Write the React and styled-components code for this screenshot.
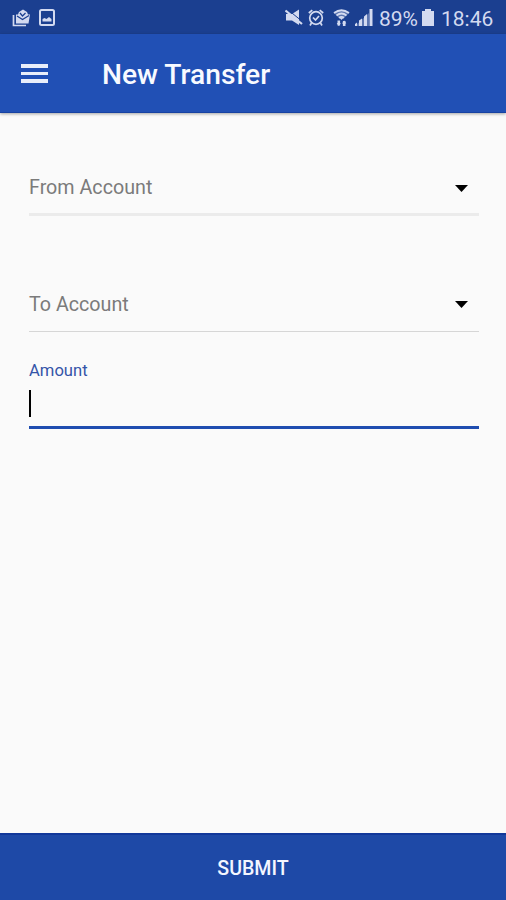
import React, {useState} from 'react';
import styled, {createGlobalStyle} from 'styled-components';

const GlobalStyle = createGlobalStyle`
  * {
    box-sizing: border-box;
  }

  body {
    margin: 0;
    background-color: #fafafa;
    font-family: Roboto, 'Liberation Sans', sans-serif;
  }
`;

const Screen = styled.div`
  display: flex;
  flex-direction: column;
  height: 100vh;
  overflow: hidden;
  background-color: #fafafa;
`;

const StatusBar = styled.div`
  display: flex;
  flex: none;
  align-items: center;
  justify-content: space-between;
  height: 34px;
  padding: 1px 12px 0 12px;
  background-color: #1b3f90;
  color: #d3daf0;
`;

const StatusGroup = styled.div`
  display: flex;
  align-items: center;
`;

const StatusIcon = styled.svg`
  display: block;
  flex: none;
  margin-right: ${props => props.$gap || 0}px;
`;

const StatusText = styled.span`
  width: ${props => props.$width}px;
  padding-top: 2px;
  font-size: 21px;
  line-height: 24px;
  white-space: nowrap;
`;

const AppBar = styled.header`
  display: flex;
  flex: none;
  align-items: center;
  height: 79px;
  padding-left: 20px;
  background-color: #2150b5;
  border-bottom: 1px solid #1742a2;
  box-shadow: 0 1px 3px rgba(0, 0, 0, 0.35);
`;

const MenuButton = styled.button`
  display: flex;
  flex-direction: column;
  gap: 4px;
  width: 27px;
  margin: 1px 54px 0 1px;
  padding: 0;
  border: none;
  background: none;
`;

const MenuLine = styled.span`
  height: 3.600px;
  background-color: #e9eefa;
`;

const Title = styled.h1`
  margin: 3px 0 0;
  color: #f8faff;
  font-size: 28.2px;
  font-weight: 500;
  line-height: 36px;
`;

const Form = styled.form`
  display: flex;
  flex: 1;
  flex-direction: column;
  padding: 50px 27px 0 29px;
`;

const Select = styled.div`
  display: flex;
  align-items: center;
  justify-content: space-between;
  height: ${props => props.$thick ? 53 : 54}px;
  margin-bottom: ${props => props.$gap}px;
  padding-right: 11px;
  border-bottom: ${props => props.$thick ? '3px solid #ebebeb' : '1px solid #d6d6d6'};
  color: #7b7b7b;
  font-size: 19.7px;
  line-height: 24px;
`;

const Field = styled.label`
  display: flex;
  flex-direction: column;
  height: 69px;
  border-bottom: 3px solid #1f4db0;
`;

const FieldLabel = styled.span`
  padding-top: 1px;
  color: #3454a8;
  font-size: 16.6px;
  line-height: 20px;
`;

const Caret = styled.span`
  width: 2px;
  height: 27px;
  margin-top: 9px;
  background-color: #000;
`;

const SubmitButton = styled.button`
  flex: none;
  height: 67px;
  padding: 2px 0 0;
  border: none;
  border-top: 2px solid #12389a;
  background-color: #1e49a7;
  color: #f3f6ff;
  font-family: inherit;
  font-size: 19.6px;
  font-weight: 500;
`;

const Arrow = () => (
    <svg width="13" height="7" viewBox="0 0 13 7">
        <path d="M0 0h13L6.5 7z" fill="#000"/>
    </svg>
);

const Status = () => (
    <StatusBar>
        <StatusGroup>
            <StatusIcon $gap={8} width="19" height="18" viewBox="0 0 19 18">
                <path d="M1.500 6v10.500H14" fill="none" stroke="currentColor" strokeWidth="1.700"/>
                <path d="M4 5.500h2l1-2.500 4-2.500 4 2.500 1 2.500h2l-1.500 9H4z" fill="currentColor"/>
                <path d="M5 7l5.500 3.500L17 6.500M8 4l2.500 3L13.500 4" fill="none" stroke="#1b3f90" strokeWidth="1.200"/>
            </StatusIcon>
            <StatusIcon width="16" height="17" viewBox="0 0 16 17">
                <rect x="1" y="1" width="14" height="15" rx="1.500" fill="none" stroke="currentColor" strokeWidth="2"/>
                <path d="M3.500 12.500V10l2-1 2 1 2.500-2 2.500 2v2.500z" fill="currentColor"/>
            </StatusIcon>
        </StatusGroup>
        <StatusGroup>
            <StatusIcon $gap={5} width="18" height="17" viewBox="0 0 18 17">
                <path d="M1 5h6l7-4.500V16L7 11.500H1z" fill="currentColor"/>
                <path d="M2 0l16 13" stroke="#1b3f90" strokeWidth="1"/>
                <path d="M.5 1.500l16.500 13.500" stroke="currentColor" strokeWidth="2.200"/>
            </StatusIcon>
            <StatusIcon $gap={9} width="16" height="18" viewBox="0 0 16 18">
                <g fill="none" stroke="currentColor" strokeWidth="1.700">
                    <circle cx="8" cy="9" r="6.300"/>
                    <path d="M.8 4l3.500-2.800M15.200 4l-3.500-2.800M3.500 14L2 16.500M12.500 14l1.500 2.500M5 8.500l2.500 2.500L11 7"/>
                </g>
            </StatusIcon>
            <StatusIcon $gap={5} width="17" height="18" viewBox="0 0 17 18">
                <path d="M1 4Q8.500-1.500 16 4L10 10H7z" fill="currentColor" opacity="0.35"/>
                <g fill="none" stroke="currentColor" strokeWidth="1.800">
                    <path d="M1 4Q8.500-1.500 16 4M3.500 6.500Q8.500 2.500 13.500 6.500M6 8.800Q8.500 7 11 8.800"/>
                </g>
                <path d="M8.500 11L6.500 8.500h4z" fill="currentColor"/>
                <path d="M5.800 11.500v5M11.200 17v-5" stroke="currentColor" strokeWidth="2.600"/>
                <path d="M3.700 14L5.800 17l2-3zM9 14.500l2.200-3 2.100 3z" fill="currentColor"/>
            </StatusIcon>
            <StatusIcon $gap={6} width="18" height="18" viewBox="0 0 18 18">
                <path d="M0 17L14 4v13z" fill="currentColor" opacity="0.35"/>
                <path d="M0 17v-2l2-1.500V17zM4 17v-5.500l3-2V17zM9 17V7.500L12 5v12zM14.500 17V0h3v17z" fill="currentColor"/>
            </StatusIcon>
            <StatusText $width={43}>89%</StatusText>
            <StatusIcon $gap={7} width="12" height="18" viewBox="0 0 12 18">
                <path d="M0 2h3V0h6v2h3v15H0z" fill="currentColor"/>
            </StatusIcon>
            <StatusText $width={53}>18:46</StatusText>
        </StatusGroup>
    </StatusBar>
);

const App = () => {
    const [amount] = useState('');

    return (
        <Screen>
            <GlobalStyle/>
            <Status/>
            <AppBar>
                <MenuButton type="button">
                    <MenuLine/>
                    <MenuLine/>
                    <MenuLine/>
                </MenuButton>
                <Title>New Transfer</Title>
            </AppBar>
            <Form onSubmit={(event) => event.preventDefault()}>
                <Select $thick $gap={62}>
                    From Account
                    <Arrow/>
                </Select>
                <Select $gap={28}>
                    To Account
                    <Arrow/>
                </Select>
                <Field>
                    <FieldLabel>Amount</FieldLabel>
                    {amount}
                    <Caret/>
                </Field>
            </Form>
            <SubmitButton type="submit">SUBMIT</SubmitButton>
        </Screen>
    );
}

export default App;
